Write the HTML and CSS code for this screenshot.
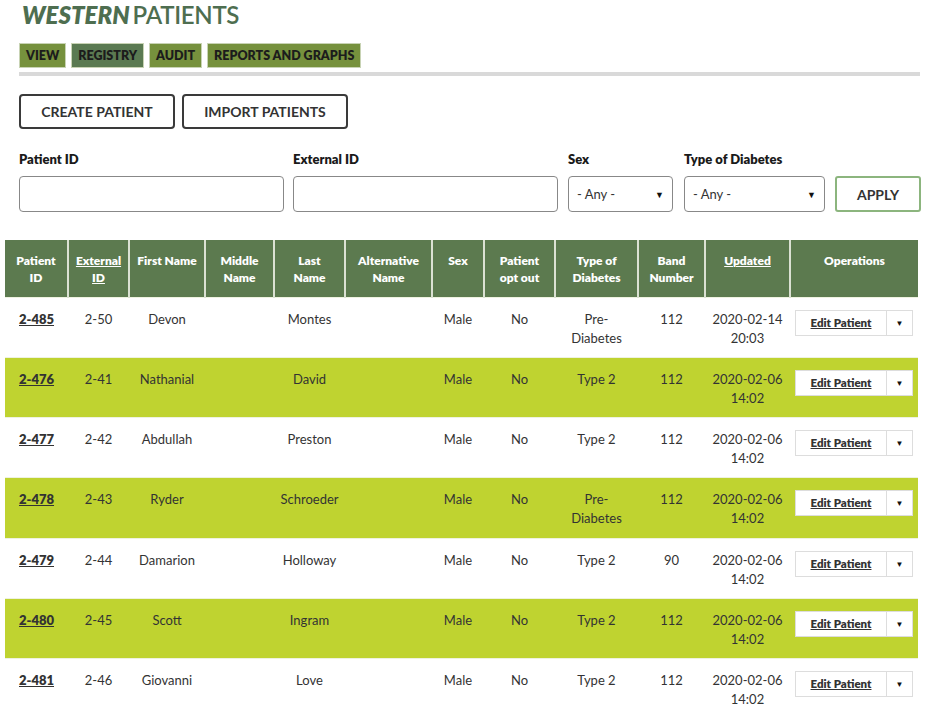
FILE: index.html
```html
<!DOCTYPE html>
<html>
<head>
<meta charset="utf-8">
<title>Western Patients</title>
<link rel="stylesheet" href="styles.css">
</head>
<body>
<div class="page">
  <h1 class="title"><em>WESTERN</em><span>PATIENTS</span></h1>
  <nav class="tabs">
    <a class="tab">VIEW</a>
    <a class="tab active">REGISTRY</a>
    <a class="tab">AUDIT</a>
    <a class="tab">REPORTS AND GRAPHS</a>
  </nav>
  <div class="actions">
    <button class="btn">CREATE PATIENT</button>
    <button class="btn">IMPORT PATIENTS</button>
  </div>
  <form class="filters">
    <div class="field f-id"><label>Patient ID</label><input type="text"></div>
    <div class="field f-ext"><label>External ID</label><input type="text"></div>
    <div class="field f-sex"><label>Sex</label><div class="select">- Any -<span class="tri">▼</span></div></div>
    <div class="field f-type"><label>Type of Diabetes</label><div class="select">- Any -<span class="tri">▼</span></div></div>
    <div class="field f-apply"><button type="button" class="apply">APPLY</button></div>
  </form>
</div>
<table class="grid">
  <colgroup>
    <col style="width:63px"><col style="width:61px"><col style="width:76px"><col style="width:69px">
    <col style="width:71px"><col style="width:87px"><col style="width:52px"><col style="width:71px">
    <col style="width:83px"><col style="width:67px"><col style="width:85px"><col style="width:128px">
  </colgroup>
  <thead>
    <tr>
      <th>Patient<br>ID</th><th><u>External<br>ID</u></th><th>First Name</th><th>Middle<br>Name</th>
      <th>Last<br>Name</th><th>Alternative<br>Name</th><th>Sex</th><th>Patient<br>opt out</th>
      <th>Type of<br>Diabetes</th><th>Band<br>Number</th><th><u>Updated</u></th><th>Operations</th>
    </tr>
  </thead>
  <tbody>
    <tr>
      <td><a class="pid">2-485</a></td><td>2-50</td><td>Devon</td><td></td><td>Montes</td><td></td><td>Male</td><td>No</td><td>Pre-<br>Diabetes</td><td>112</td><td>2020-02-14<br>20:03</td>
      <td><div class="edit"><a>Edit Patient</a><span class="caret">▼</span></div></td>
    </tr>
    <tr class="alt">
      <td><a class="pid">2-476</a></td><td>2-41</td><td>Nathanial</td><td></td><td>David</td><td></td><td>Male</td><td>No</td><td>Type 2</td><td>112</td><td>2020-02-06<br>14:02</td>
      <td><div class="edit"><a>Edit Patient</a><span class="caret">▼</span></div></td>
    </tr>
    <tr>
      <td><a class="pid">2-477</a></td><td>2-42</td><td>Abdullah</td><td></td><td>Preston</td><td></td><td>Male</td><td>No</td><td>Type 2</td><td>112</td><td>2020-02-06<br>14:02</td>
      <td><div class="edit"><a>Edit Patient</a><span class="caret">▼</span></div></td>
    </tr>
    <tr class="alt">
      <td><a class="pid">2-478</a></td><td>2-43</td><td>Ryder</td><td></td><td>Schroeder</td><td></td><td>Male</td><td>No</td><td>Pre-<br>Diabetes</td><td>112</td><td>2020-02-06<br>14:02</td>
      <td><div class="edit"><a>Edit Patient</a><span class="caret">▼</span></div></td>
    </tr>
    <tr>
      <td><a class="pid">2-479</a></td><td>2-44</td><td>Damarion</td><td></td><td>Holloway</td><td></td><td>Male</td><td>No</td><td>Type 2</td><td>90</td><td>2020-02-06<br>14:02</td>
      <td><div class="edit"><a>Edit Patient</a><span class="caret">▼</span></div></td>
    </tr>
    <tr class="alt">
      <td><a class="pid">2-480</a></td><td>2-45</td><td>Scott</td><td></td><td>Ingram</td><td></td><td>Male</td><td>No</td><td>Type 2</td><td>112</td><td>2020-02-06<br>14:02</td>
      <td><div class="edit"><a>Edit Patient</a><span class="caret">▼</span></div></td>
    </tr>
    <tr>
      <td><a class="pid">2-481</a></td><td>2-46</td><td>Giovanni</td><td></td><td>Love</td><td></td><td>Male</td><td>No</td><td>Type 2</td><td>112</td><td>2020-02-06<br>14:02</td>
      <td><div class="edit"><a>Edit Patient</a><span class="caret">▼</span></div></td>
    </tr>
  </tbody>
</table>
</body>
</html>
```
FILE: styles.css
```css
* { box-sizing: border-box; }
html, body { margin: 0; padding: 0; background: #fff; }
body {
  font-family: Lato, "Open Sans", Arial, sans-serif;
  color: #333;
  font-size: 13px;
}
.page { padding: 0 5px 0 19px; }
.title {
  margin: 0;
  padding-top: 1px;
  padding-left: 3px;
  height: 36px;
  font-size: 24px;
  line-height: 28px;
  color: #4e6e50;
  font-weight: 700;
}
.title em { font-style: italic; font-weight: 800; margin-right: 3px; }
.title span { font-weight: 600; letter-spacing: -0.3px; }
.tabs {
  display: flex;
  gap: 5px;
  margin-top: 7px;
  padding-bottom: 4px;
  border-bottom: 4px solid #d9d9d9;
}
.tab {
  display: block;
  background: #76913d;
  color: #1c1c1c;
  font-weight: 800;
  font-size: 12.5px;
  line-height: 23px;
  height: 25px;
  padding: 0 6px;
  border: 1px solid #c8d3b4;
}
.tab.active { background: #5b7a52; }
.actions {
  display: flex;
  gap: 7px;
  margin-top: 18px;
}
.btn {
  height: 35px;
  border: 2px solid #3a3a3a;
  border-radius: 4px;
  background: #fff;
  color: #333;
  font-family: inherit;
  font-size: 14px;
  font-weight: 700;
  padding: 0 19px;
}
.btn:first-child { width: 156px; }
.btn:last-child { width: 166px; }
.filters {
  display: flex;
  align-items: flex-end;
  margin: 22px 0 0 0;
}
.field { display: flex; flex-direction: column; }
.field label {
  font-weight: 800;
  font-size: 13px;
  color: #1a1a1a;
  line-height: 16px;
  margin-bottom: 9px;
}
.field input {
  height: 36px;
  border: 1px solid #888;
  border-radius: 4px;
  width: 265px;
  font-family: inherit;
}
.f-id { margin-right: 9px; }
.f-ext { margin-right: 10px; }
.f-sex { margin-right: 11px; }
.f-type { margin-right: 11px; }
.select {
  height: 36px;
  border: 1px solid #888;
  border-radius: 4px;
  padding: 0 8px;
  display: flex;
  align-items: center;
  justify-content: space-between;
  font-size: 13px;
  color: #333;
}
.f-sex .select { width: 105px; }
.f-type .select { width: 141px; }
.tri { font-size: 9px; color: #111; }
.apply {
  height: 36px;
  width: 86px;
  margin-left: -1px;
  border: 2px solid #8cb57e;
  border-radius: 3px;
  background: #fff;
  color: #333;
  font-family: inherit;
  font-weight: 700;
  font-size: 14px;
}
.grid {
  margin: 28px 0 0 5px;
  width: 912px;
  table-layout: fixed;
  border-collapse: collapse;
}
.grid th {
  background: #5c7a4f;
  color: #fff;
  font-weight: 800;
  font-size: 12px;
  line-height: 17px;
  height: 57px;
  vertical-align: top;
  padding: 12px 2px 0;
  border: 2px solid #dbe1d3;
  border-top: 0;
  border-bottom: 0;
}
.grid th:first-child { border-left: 0; }
.grid th:last-child { border-right: 0; }
.grid th u { text-decoration-thickness: 1px; }
.grid td {
  height: 60.3px;
  vertical-align: top;
  text-align: center;
  padding: 12px 2px 0;
  font-size: 13px;
  line-height: 19px;
  color: #333;
  border-top: 1px solid #eef2e0;
}
.grid tr.alt td { background: #bfd330; }
.pid { font-weight: 800; text-decoration: underline; color: #333; }
.grid td:last-child { padding: 12px 4px 0 5px; }
.edit {
  display: flex;
  height: 26px;
  background: #fff;
  border: 1px solid #ddd;
  width: 118px;
}
.edit a {
  flex: 1;
  font-weight: 800;
  font-size: 11.5px;
  line-height: 24px;
  text-decoration: underline;
  color: #333;
}
.caret {
  width: 26px;
  border-left: 1px solid #ddd;
  font-size: 8px;
  line-height: 24px;
  color: #111;
}
```
